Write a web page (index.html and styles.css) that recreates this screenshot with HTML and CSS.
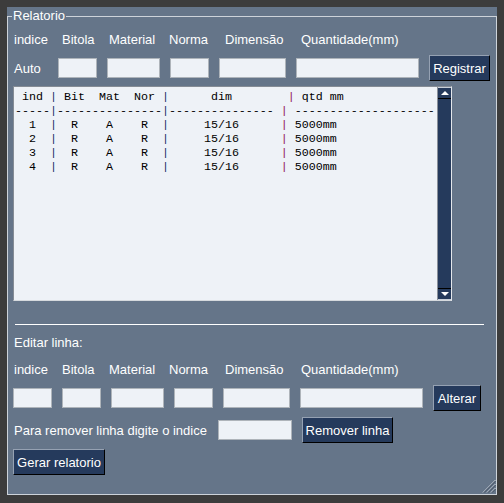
FILE: index.html
```html
<!DOCTYPE html>
<html lang="pt">
<head>
<meta charset="utf-8">
<title>Relatorio</title>
<link rel="stylesheet" href="styles.css">
</head>
<body>
<div class="window">
  <fieldset class="group">
    <legend class="group-title">Relatorio</legend>

    <div class="labels top-labels">
      <span>indice</span><span>Bitola</span><span>Material</span><span>Norma</span><span>Dimensão</span><span>Quantidade(mm)</span>
    </div>

    <div class="form-row register-row">
      <span class="auto">Auto</span>
      <input class="field w39" type="text">
      <input class="field w53" type="text">
      <input class="field w39" type="text">
      <input class="field w67" type="text">
      <input class="field w123" type="text">
      <button class="btn w61">Registrar</button>
    </div>

    <div class="scrollpane">
      <div class="report">
        <div class="line"><span> ind </span><span class="pa">|</span><span> Bit  Mat  Nor </span><span class="pa">|</span><span>      dim        </span><span class="pb">|</span><span> qtd mm</span></div>
        <div class="line"><span>-----</span><span class="pa">|</span><span>---------------</span><span class="pa">|</span><span>--------------- </span><span class="pb">|</span><span> --------------------</span></div>
        <div class="line"><span>  1  </span><span class="pa">|</span><span>  R    A    R  </span><span class="pa">|</span><span>     15/16      </span><span class="pb">|</span><span> 5000mm</span></div>
        <div class="line"><span>  2  </span><span class="pa">|</span><span>  R    A    R  </span><span class="pa">|</span><span>     15/16      </span><span class="pb">|</span><span> 5000mm</span></div>
        <div class="line"><span>  3  </span><span class="pa">|</span><span>  R    A    R  </span><span class="pa">|</span><span>     15/16      </span><span class="pb">|</span><span> 5000mm</span></div>
        <div class="line"><span>  4  </span><span class="pa">|</span><span>  R    A    R  </span><span class="pa">|</span><span>     15/16      </span><span class="pb">|</span><span> 5000mm</span></div>
      </div>
      <div class="vscroll">
        <div class="arrow arrow-up"><span class="tri tri-up"></span></div>
        <div class="track"></div>
        <div class="arrow arrow-down"><span class="tri tri-down"></span></div>
      </div>
    </div>

    <hr class="sep">

    <div class="edit-title">Editar linha:</div>

    <div class="labels edit-labels">
      <span>indice</span><span>Bitola</span><span>Material</span><span>Norma</span><span>Dimensão</span><span>Quantidade(mm)</span>
    </div>

    <div class="form-row edit-row">
      <input class="field w39" type="text">
      <input class="field w39" type="text">
      <input class="field w53" type="text">
      <input class="field w39" type="text">
      <input class="field w67" type="text">
      <input class="field w123" type="text">
      <button class="btn w48">Alterar</button>
    </div>

    <div class="form-row remove-row">
      <span class="remove-label">Para remover linha digite o indice</span>
      <input class="field w74" type="text">
      <button class="btn w91">Remover linha</button>
    </div>

    <div class="form-row report-row">
      <button class="btn w92">Gerar relatorio</button>
    </div>
  </fieldset>

  <svg class="grip" width="14" height="14" viewBox="0 0 14 14">
    <g stroke-width="1">
      <line x1="13.5" y1="1" x2="1" y2="13.5" stroke="#d4dae2"/>
      <line x1="13.5" y1="2" x2="2" y2="13.5" stroke="#3b4759"/>
      <line x1="13.5" y1="5" x2="5" y2="13.5" stroke="#d4dae2"/>
      <line x1="13.5" y1="6" x2="6" y2="13.5" stroke="#3b4759"/>
      <line x1="13.5" y1="9" x2="9" y2="13.5" stroke="#d4dae2"/>
      <line x1="13.5" y1="10" x2="10" y2="13.5" stroke="#3b4759"/>
    </g>
  </svg>
</div>
</body>
</html>
```

FILE: styles.css
```css
html, body {
  margin: 0;
  background: #3c3c3c;
}

body {
  padding: 7px;
  font-family: "Liberation Sans", Arial, sans-serif;
  font-size: 13px;
  color: #ffffff;
}

.window {
  position: relative;
  width: 490px;
  height: 488px;
  background: #657589;
}

.group {
  margin: 0;
  padding: 0 0 0 5px;
  height: 488px;
  box-sizing: border-box;
  border: 1px solid #cdd3da;
  min-width: 0;
}

.group-title {
  margin-left: -1px;
  padding: 0 1px;
  font-size: 13px;
  line-height: 18px;
  color: #ffffff;
}

.labels {
  display: grid;
  grid-template-columns: 48px 47px 60px 56px 76px auto;
  height: 20px;
  line-height: 20px;
  padding-left: 1px;
  white-space: nowrap;
}

.top-labels {
  margin-top: 5px;
}

.edit-labels {
  margin-top: 7px;
}

.form-row {
  display: flex;
  align-items: center;
  gap: 10px;
  height: 26px;
}

.register-row {
  margin-top: 5px;
}

.edit-row {
  margin-top: 5px;
}

.remove-row {
  margin-top: 6px;
}

.report-row {
  margin-top: 6px;
}

.auto {
  width: 34px;
  padding-left: 1px;
}

.remove-label {
  width: 194px;
  padding-left: 1px;
  white-space: nowrap;
}

.field {
  height: 20px;
  box-sizing: border-box;
  margin: 0;
  padding: 0 2px;
  border: 1px solid #aeb4ba;
  background: #eef2f7;
  font-family: "Liberation Sans", Arial, sans-serif;
  font-size: 13px;
  flex: none;
}

.w39 { width: 39px; }
.w53 { width: 53px; }
.w67 { width: 67px; }
.w74 { width: 74px; }
.w123 { width: 123px; }

.btn {
  height: 26px;
  box-sizing: border-box;
  margin: 0;
  padding: 0;
  flex: none;
  background: #253a5c;
  color: #ffffff;
  font-family: "Liberation Sans", Arial, sans-serif;
  font-size: 13px;
  border: 1px solid;
  border-color: #95a1b2 #000000 #000000 #95a1b2;
  text-align: center;
}

.w48 { width: 48px; }
.w61 { width: 61px; }
.w91 { width: 91px; }
.w92 { width: 92px; }

.scrollpane {
  display: flex;
  margin-top: 5px;
  width: 439px;
  height: 215px;
  box-sizing: border-box;
  border: 1px solid;
  border-color: #858c95 #e4e7eb #d6dade #858c95;
}

.report {
  flex: 1;
  padding: 3px 0 0 1px;
  background: #eef2f7;
  color: #000000;
  font-family: "Liberation Mono", "Courier New", monospace;
  font-size: 11.67px;
  overflow: hidden;
}

.line {
  height: 14px;
  line-height: 14px;
  white-space: pre;
}

.pa { color: #1c2c66; }
.pb { color: #922458; }

.vscroll {
  width: 14px;
  box-sizing: border-box;
  border-left: 1px solid #8a9099;
  display: flex;
  flex-direction: column;
  background: #253a5c;
}

.track {
  flex: 1;
}

.arrow {
  height: 12px;
  box-sizing: border-box;
  display: flex;
  align-items: center;
  justify-content: center;
  background: #253a5c;
}

.arrow-up {
  border-top: 1px solid #c8d0da;
  border-bottom: 1px solid #000000;
}

.arrow-down {
  border-top: 1px solid #000000;
  border-bottom: 1px solid #c8d0da;
}

.tri {
  width: 0;
  height: 0;
  border-left: 4px solid transparent;
  border-right: 4px solid transparent;
}

.tri-up {
  border-bottom: 4px solid #ffffff;
}

.tri-down {
  border-top: 4px solid #ffffff;
}

.sep {
  margin: 23px 0 0 2px;
  width: 469px;
  height: 0;
  border: 0;
  border-top: 1px solid #ffffff;
}

.edit-title {
  margin-top: 8px;
  height: 20px;
  line-height: 20px;
  padding-left: 1px;
}

.grip {
  position: absolute;
  right: 1px;
  bottom: 2px;
}
```
